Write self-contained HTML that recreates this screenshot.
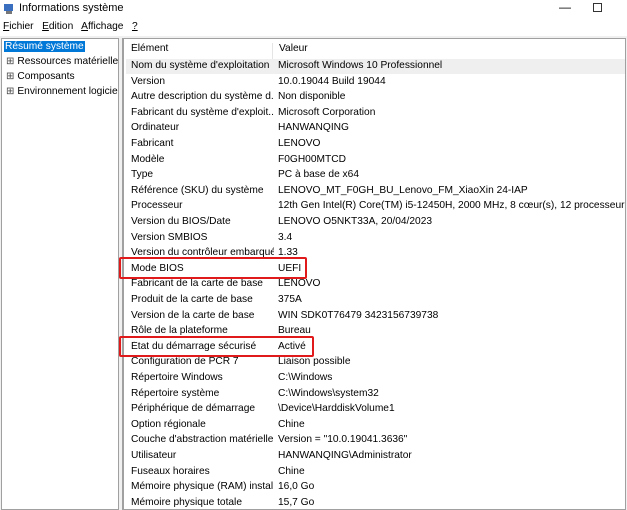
<!DOCTYPE html>
<html><head><meta charset="utf-8"><style>
body{margin:0;width:627px;height:500px;overflow:hidden;background:#f0f0f0;font-family:"Segoe UI","Liberation Sans",sans-serif;font-size:10.2px;color:#000;position:relative}
.t{position:absolute;white-space:nowrap}
#title{left:0;top:0;width:627px;height:18px;background:#fff}
#menu{left:0;top:18px;width:627px;height:18px;background:#fff}
#left{position:absolute;left:1px;top:38px;width:116px;height:470px;background:#fff;border:1px solid #a0a0a0;overflow:hidden}
#right{position:absolute;left:122px;top:38px;width:501px;height:470px;background:#fff;border:1px solid #a0a0a0;border-left:2px solid #a0a0a0;overflow:hidden}
.row{position:absolute;left:2px;height:15.6px;width:500px}
.row span{position:absolute;top:1.5px;white-space:nowrap}
.a{left:5px;width:143px;overflow:hidden}
.b{left:152px}
.red{position:absolute;border:2px solid #e0191b;border-radius:2px}
</style></head><body>
<div class="t" id="title"></div>
<svg style="position:absolute;left:3px;top:3px" width="12" height="12"><rect x="1" y="1" width="9" height="7" fill="#3a6fc0"/><rect x="3" y="8" width="6" height="3" fill="#777"/></svg>
<div class="t" style="left:19px;top:2px;font-size:11px">Informations système</div>
<div class="t" style="left:559px;top:0px;font-size:12px">—</div>
<div class="t" style="left:593px;top:3px;width:7px;height:7px;border:1px solid #333"></div>
<div class="t" id="menu"></div>
<div class="t" style="left:3px;top:21px"><u>F</u>ichier &nbsp; <u>E</u>dition &nbsp; <u>A</u>ffichage &nbsp; <u>?</u></div>
<div id="left">
<div class="t" style="left:2px;top:2px;background:#0078d7;color:#fff;padding:0 1px">Résumé système</div>
<div class="t" style="left:4px;top:17px;color:#444">⊞ <span style="color:#000">Ressources matérielles</span></div>
<div class="t" style="left:4px;top:32px;color:#444">⊞ <span style="color:#000">Composants</span></div>
<div class="t" style="left:4px;top:47px;color:#444">⊞ <span style="color:#000">Environnement logiciel</span></div>
</div>
<div id="right">
<div class="row" style="top:2px"><span class="a">Élément</span><span class="b" style="border-left:1px solid #e5e5e5;left:146px;padding-left:6px;height:16px">Valeur</span></div>
<div class="row" style="top:19.5px;background:#efefef"><span class="a">Nom du système d'exploitation</span><span class="b">Microsoft Windows 10 Professionnel</span></div>
<div class="row" style="top:35.1px"><span class="a">Version</span><span class="b">10.0.19044 Build 19044</span></div>
<div class="row" style="top:50.7px"><span class="a">Autre description du système d...</span><span class="b">Non disponible</span></div>
<div class="row" style="top:66.3px"><span class="a">Fabricant du système d'exploit...</span><span class="b">Microsoft Corporation</span></div>
<div class="row" style="top:81.9px"><span class="a">Ordinateur</span><span class="b">HANWANQING</span></div>
<div class="row" style="top:97.5px"><span class="a">Fabricant</span><span class="b">LENOVO</span></div>
<div class="row" style="top:113.1px"><span class="a">Modèle</span><span class="b">F0GH00MTCD</span></div>
<div class="row" style="top:128.7px"><span class="a">Type</span><span class="b">PC à base de x64</span></div>
<div class="row" style="top:144.3px"><span class="a">Référence (SKU) du système</span><span class="b">LENOVO_MT_F0GH_BU_Lenovo_FM_XiaoXin 24-IAP</span></div>
<div class="row" style="top:159.9px"><span class="a">Processeur</span><span class="b">12th Gen Intel(R) Core(TM) i5-12450H, 2000 MHz, 8 cœur(s), 12 processeur(s)</span></div>
<div class="row" style="top:175.5px"><span class="a">Version du BIOS/Date</span><span class="b">LENOVO O5NKT33A, 20/04/2023</span></div>
<div class="row" style="top:191.1px"><span class="a">Version SMBIOS</span><span class="b">3.4</span></div>
<div class="row" style="top:206.7px"><span class="a">Version du contrôleur embarqué</span><span class="b">1.33</span></div>
<div class="row" style="top:222.3px"><span class="a">Mode BIOS</span><span class="b">UEFI</span></div>
<div class="row" style="top:237.9px"><span class="a">Fabricant de la carte de base</span><span class="b">LENOVO</span></div>
<div class="row" style="top:253.5px"><span class="a">Produit de la carte de base</span><span class="b">375A</span></div>
<div class="row" style="top:269.1px"><span class="a">Version de la carte de base</span><span class="b">WIN SDK0T76479 3423156739738</span></div>
<div class="row" style="top:284.7px"><span class="a">Rôle de la plateforme</span><span class="b">Bureau</span></div>
<div class="row" style="top:300.3px"><span class="a">État du démarrage sécurisé</span><span class="b">Activé</span></div>
<div class="row" style="top:315.9px"><span class="a">Configuration de PCR 7</span><span class="b">Liaison possible</span></div>
<div class="row" style="top:331.5px"><span class="a">Répertoire Windows</span><span class="b">C:\Windows</span></div>
<div class="row" style="top:347.1px"><span class="a">Répertoire système</span><span class="b">C:\Windows\system32</span></div>
<div class="row" style="top:362.7px"><span class="a">Périphérique de démarrage</span><span class="b">\Device\HarddiskVolume1</span></div>
<div class="row" style="top:378.3px"><span class="a">Option régionale</span><span class="b">Chine</span></div>
<div class="row" style="top:393.9px"><span class="a">Couche d'abstraction matérielle</span><span class="b">Version = "10.0.19041.3636"</span></div>
<div class="row" style="top:409.5px"><span class="a">Utilisateur</span><span class="b">HANWANQING\Administrator</span></div>
<div class="row" style="top:425.1px"><span class="a">Fuseaux horaires</span><span class="b">Chine</span></div>
<div class="row" style="top:440.7px"><span class="a">Mémoire physique (RAM) instal...</span><span class="b">16,0 Go</span></div>
<div class="row" style="top:456.3px"><span class="a">Mémoire physique totale</span><span class="b">15,7 Go</span></div>
</div>
<div class="red" style="left:119px;top:257px;width:184px;height:18px"></div>
<div class="red" style="left:119px;top:336px;width:191px;height:17px"></div>
</body></html>
